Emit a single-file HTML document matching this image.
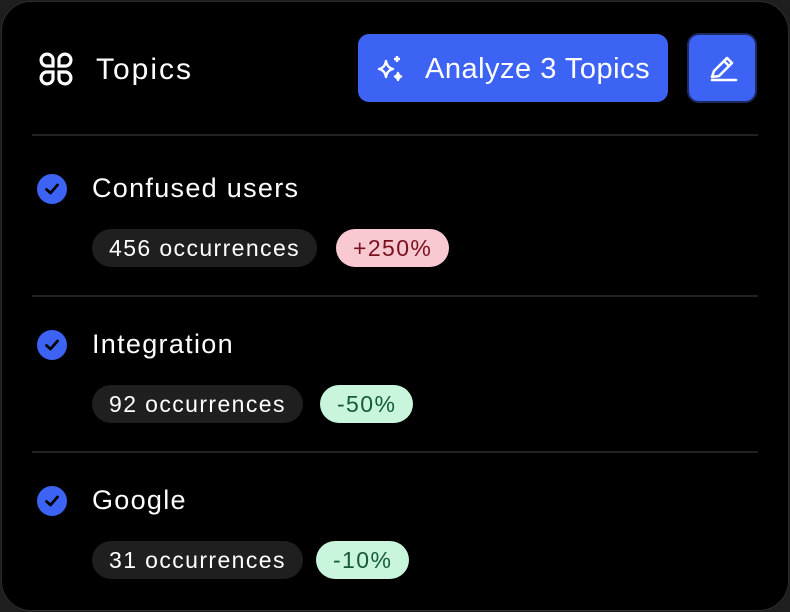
<!DOCTYPE html>
<html><head><style>
*{margin:0;padding:0;box-sizing:border-box}
body{width:790px;height:612px;background:#1e1e1e;font-family:"Liberation Sans",sans-serif;overflow:hidden;position:relative}
.card{position:absolute;left:1px;top:1px;width:788px;height:610px;background:#000;border:1.5px solid #2c2c2c;border-radius:30px}
.a{position:absolute}
.title{left:96px;top:53px;font-size:30px;letter-spacing:2px;color:#fff}
.btn{left:358px;top:34px;width:310px;height:68px;background:#3d63f5;border-radius:11px;color:#fff;font-size:29px;letter-spacing:0.5px}
.btn span{position:absolute;left:67px;top:19px}
.edit{left:687px;top:33px;width:70px;height:70px;background:#3d63f5;border:2px solid #1d2b63;border-radius:12px}
.hr{left:32px;width:726px;height:2px;background:#222}
.name{left:92px;font-size:27px;letter-spacing:1.3px;color:#fff}
.pill{height:38px;border-radius:19px;font-size:23px;letter-spacing:1.4px;line-height:38px;padding:0 17px 0 17px}
.g{background:#1f1f1f;color:#fff}
.red{background:#f9c9d1;color:#7a1020}
.grn{background:#c8f5dc;color:#145c35}
.chk{left:37px;width:30px;height:30px;border-radius:50%;background:#3d63f5}
</style></head><body>
<div class="card"></div>
<svg class="a" style="left:37px;top:50px" width="38" height="38" viewBox="0 0 38 38" fill="none" stroke="#fff" stroke-width="3.2">
<path d="M16 16H9a6 6 0 1 1 7-7z"/><path d="M22 16h7a6 6 0 1 0-7-7z"/><path d="M16 22H9a6 6 0 1 0 7 7z"/><path d="M22 22h7a6 6 0 1 1-7 7z"/></svg>
<div class="a title">Topics</div>
<div class="a btn"><svg class="a" style="left:18px;top:20px" width="30" height="30" viewBox="0 0 30 30" fill="none" stroke="#fff" stroke-width="2.4" stroke-linejoin="round"><path d="M10 7c1 5 3 7 7 8-4 1-6 3-7 8-1-5-3-7-7-8 4-1 6-3 7-8z"/><path d="M21 2v6M18 5h6" /><path d="M22 19c.5 2 1.5 3 3 3.5-1.5.5-2.5 1.5-3 3.5-.5-2-1.5-3-3-3.5 1.5-.5 2.5-1.5 3-3.5z" fill="#fff"/></svg><span>Analyze 3 Topics</span></div>
<div class="a edit"><svg class="a" style="left:20px;top:19px" width="30" height="30" viewBox="0 0 30 30" fill="none" stroke="#fff" stroke-width="2.6" stroke-linejoin="round" stroke-linecap="round"><path d="M3 23l2-6L18 4l5 5-13 13z"/><path d="M15 7l5 5"/><path d="M3 26h24"/></svg></div>
<div class="a hr" style="top:134px"></div>
<div class="a hr" style="top:295px"></div>
<div class="a hr" style="top:451px"></div>

<div class="a chk" style="top:174px"><svg width="30" height="30" viewBox="0 0 30 30" fill="none" stroke="#000" stroke-width="2.8" stroke-linecap="round" stroke-linejoin="round"><path d="M9.5 15.5l4 3.5 7-8"/></svg></div>
<div class="a name" style="top:173px">Confused users</div>
<div class="a pill g" style="left:92px;top:229px">456 occurrences</div>
<div class="a pill red" style="left:336px;top:229px">+250%</div>

<div class="a chk" style="top:330px"><svg width="30" height="30" viewBox="0 0 30 30" fill="none" stroke="#000" stroke-width="2.8" stroke-linecap="round" stroke-linejoin="round"><path d="M9.5 15.5l4 3.5 7-8"/></svg></div>
<div class="a name" style="top:329px">Integration</div>
<div class="a pill g" style="left:92px;top:385px">92 occurrences</div>
<div class="a pill grn" style="left:320px;top:385px">-50%</div>

<div class="a chk" style="top:486px"><svg width="30" height="30" viewBox="0 0 30 30" fill="none" stroke="#000" stroke-width="2.8" stroke-linecap="round" stroke-linejoin="round"><path d="M9.5 15.5l4 3.5 7-8"/></svg></div>
<div class="a name" style="top:485px">Google</div>
<div class="a pill g" style="left:92px;top:541px">31 occurrences</div>
<div class="a pill grn" style="left:316px;top:541px">-10%</div>
</body></html>
